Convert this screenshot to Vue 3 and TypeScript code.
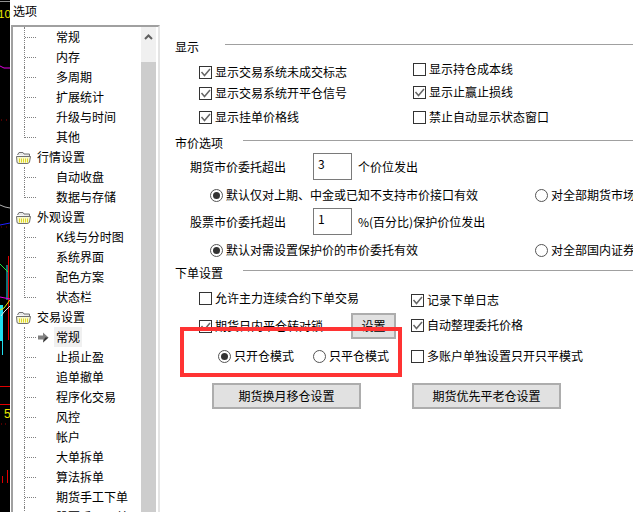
<script setup lang="ts">
interface TreeRow { text: string; kind: 'folder' | 'child'; last?: boolean; current?: boolean }
interface Check { text: string; on: boolean; gap: number }

const tree: TreeRow[] = [
  { text: '常规', kind: 'child' }, { text: '内存', kind: 'child' }, { text: '多周期', kind: 'child' },
  { text: '扩展统计', kind: 'child' }, { text: '升级与时间', kind: 'child' }, { text: '其他', kind: 'child', last: true },
  { text: '行情设置', kind: 'folder' },
  { text: '自动收盘', kind: 'child' }, { text: '数据与存储', kind: 'child', last: true },
  { text: '外观设置', kind: 'folder' },
  { text: 'K线与分时图', kind: 'child' }, { text: '系统界面', kind: 'child' }, { text: '配色方案', kind: 'child' },
  { text: '状态栏', kind: 'child', last: true },
  { text: '交易设置', kind: 'folder' },
  { text: '常规', kind: 'child', current: true }, { text: '止损止盈', kind: 'child' }, { text: '追单撤单', kind: 'child' },
  { text: '程序化交易', kind: 'child' }, { text: '风控', kind: 'child' }, { text: '帐户', kind: 'child' },
  { text: '大单拆单', kind: 'child' }, { text: '算法拆单', kind: 'child' }, { text: '期货手工下单', kind: 'child' },
  { text: '股票手工下单', kind: 'child' },
]

const showLeft: Check[] = [
  { text: '显示交易系统未成交标志', on: true, gap: 5 },
  { text: '显示交易系统开平仓信号', on: true, gap: 1 },
  { text: '显示挂单价格线', on: true, gap: 4 },
]
const showRight: Check[] = [
  { text: '显示持仓成本线', on: false, gap: 2 },
  { text: '显示止赢止损线', on: true, gap: 3 },
  { text: '禁止自动显示状态窗口', on: false, gap: 5 },
]
const orderRight: Check[] = [
  { text: '记录下单日志', on: true, gap: 7 },
  { text: '自动整理委托价格', on: true, gap: 5 },
  { text: '多账户单独设置只开只平模式', on: false, gap: 11 },
]
</script>

<template>
  <div class="screen">
    <svg class="chart" width="10" height="512" viewBox="0 0 10 512">
      <rect width="10" height="512" fill="#000" />
      <path d="M0 1.500h10" stroke="#909090" />
      <text x="-2" y="18" fill="#e8e800" font-family="Liberation Sans" font-size="11.500">10</text>
      <path d="M0 66 L4 68 L10 68" stroke="#e000e0" fill="none" />
      <path d="M1 120h1M6 120h1" stroke="#a00000" />
      <path d="M0 205 L5 207 L10 208" stroke="#b0b0b0" fill="none" />
      <path d="M0 225 L10 223" stroke="#2020ff" fill="none" />
      <path d="M1 227h1M6 227h1" stroke="#800000" />
      <path d="M8.500 256 V340" stroke="#e00000" />
      <path d="M7 265 V300" stroke="#20e0f0" />
      <path d="M0 264 L8 272" stroke="#20e040" fill="none" />
      <rect x="0" y="305" width="3" height="36" fill="#20e0f0" />
      <path d="M2.500 341 V355" stroke="#20e0f0" />
      <path d="M0 297 L10 299" stroke="#e000e0" fill="none" />
      <path d="M0 310 L4 308 L10 300" stroke="#e8e800" fill="none" />
      <path d="M1 316 L4 312 L10 306" stroke="#e0e0e0" fill="none" />
      <path d="M0 386.500h10M0 404.500h10" stroke="#e00000" />
      <text x="4" y="418" fill="#e8e800" font-family="Liberation Sans" font-size="12">5</text>
      <path d="M1 424h1M5 424h1" stroke="#a00000" />
      <path d="M2.500 476 V483M7.500 470 V483" stroke="#e00000" />
    </svg>

    <div class="dialog">
      <div class="title">选项</div>
      <div class="body">
        <div class="tree">
          <div class="tree-rows">
            <div v-for="(row, i) in tree" :key="i" class="row" :class="[row.kind, { last: row.last }]">
              <svg v-if="row.kind === 'folder'" class="folder" width="16" height="13" viewBox="0 0 16 13">
                <path d="M1.500 4 L3 1.500 H7 L8 3 H13.500 V5" fill="#e8e8e8" stroke="#707070" />
                <path d="M.5 5.500 H14.500 L13.500 11 Q13 12.500 11 12.500 H3 Q1 12.500 1 11Z" fill="#f8f8d0" stroke="#707070" />
                <path d="M3 8.500h9M3 10.500h9" stroke="#e0d820" stroke-width="2" stroke-dasharray="1 1" />
              </svg>
              <svg v-if="row.current" class="pointer" width="11" height="11" viewBox="0 0 11 11">
                <path d="M0 3.500 H5 V.5 L10.500 5.500 L5 10.500 V7.500 H0Z" fill="#808080" />
                <path d="M5 10.500 L10.500 5.500 L7 5.500Z" fill="#303030" />
              </svg>
              <span class="label" :class="{ current: row.current }">{{ row.text }}</span>
            </div>
          </div>
          <div class="scrollbar">
            <div class="scroll-up">
              <svg width="9" height="6" viewBox="0 0 9 6"><path d="M1 5 L4.500 1.500 L8 5" fill="none" stroke="#606060" stroke-width="2" /></svg>
            </div>
            <div class="scroll-thumb"></div>
          </div>
        </div>

        <div class="main">
          <div class="heading first"><span>显示</span><i></i></div>
          <div class="columns">
            <div class="col show-left">
              <div v-for="c in showLeft" :key="c.text" class="opt" :style="{ marginTop: c.gap + 'px' }">
                <span class="box"><svg v-if="c.on" width="11" height="11" viewBox="0 0 11 11"><path d="M1.500 5 L4.500 8.500 L10 2" fill="none" stroke="#666" stroke-width="1.500" /></svg></span>
                {{ c.text }}
              </div>
            </div>
            <div class="col">
              <div v-for="c in showRight" :key="c.text" class="opt" :style="{ marginTop: c.gap + 'px' }">
                <span class="box"><svg v-if="c.on" width="11" height="11" viewBox="0 0 11 11"><path d="M1.500 5 L4.500 8.500 L10 2" fill="none" stroke="#666" stroke-width="1.500" /></svg></span>
                {{ c.text }}
              </div>
            </div>
          </div>

          <div class="heading market"><span>市价选项</span><i></i></div>
          <div class="entry">
            <span class="entry-label">期货市价委托超出</span>
            <span class="field">3</span>
            <span>个价位发出</span>
          </div>
          <div class="choice">
            <span class="opt wide"><span class="radio on"></span>默认仅对上期、中金或已知不支持市价接口有效</span>
            <span class="opt"><span class="radio"></span>对全部期货市场有效</span>
          </div>
          <div class="entry stock">
            <span class="entry-label">股票市价委托超出</span>
            <span class="field">1</span>
            <span>%(百分比)保护价位发出</span>
          </div>
          <div class="choice">
            <span class="opt wide"><span class="radio on"></span>默认对需设置保护价的市价委托有效</span>
            <span class="opt"><span class="radio"></span>对全部国内证券有效</span>
          </div>

          <div class="heading order"><span>下单设置</span><i></i></div>
          <div class="columns">
            <div class="col order-left">
              <div class="opt allow"><span class="box"></span>允许主力连续合约下单交易</div>
              <div class="lock">
                <div class="opt lock-opt">
                  <span class="box"><svg width="11" height="11" viewBox="0 0 11 11"><path d="M1.500 5 L4.500 8.500 L10 2" fill="none" stroke="#666" stroke-width="1.500" /></svg></span>
                  期货日内平仓转对锁
                </div>
                <button class="btn small">设置</button>
              </div>
              <div class="modes">
                <span class="opt mode"><span class="radio on"></span>只开仓模式</span>
                <span class="opt"><span class="radio"></span>只平仓模式</span>
              </div>
              <button class="btn large left">期货换月移仓设置</button>
            </div>
            <div class="col">
              <div v-for="c in orderRight" :key="c.text" class="opt" :style="{ marginTop: c.gap + 'px' }">
                <span class="box"><svg v-if="c.on" width="11" height="11" viewBox="0 0 11 11"><path d="M1.500 5 L4.500 8.500 L10 2" fill="none" stroke="#666" stroke-width="1.500" /></svg></span>
                {{ c.text }}
              </div>
              <button class="btn large right">期货优先平老仓设置</button>
            </div>
          </div>
          <div class="mark"></div>
        </div>
      </div>
    </div>
  </div>
</template>

<style scoped>
.screen {
  width: 633px;
  height: 512px;
  display: flex;
  overflow: hidden;
  background: #fff;
  color: #000;
  font-family: "Noto Sans CJK SC", "Liberation Sans", sans-serif;
  white-space: nowrap;
}
.chart { flex: none; display: block; }
.dialog { flex: 1; min-width: 0; display: flex; flex-direction: column; }
.title { height: 25px; padding-left: 3px; font-size: 12px; line-height: 22px; flex: none; }
.body { flex: 1; min-height: 0; display: flex; }

.tree {
  width: 149px;
  margin-left: 1px;
  flex: none;
  display: flex;
  border-top: 2px solid #a0a0a0;
  border-left: 2px solid #a0a0a0;
  border-right: 2px solid #e4e4e4;
  overflow: hidden;
  box-sizing: border-box;
}
.tree-rows { width: 128px; flex: none; }
.row { height: 20px; display: flex; align-items: center; position: relative; font-size: 12px; line-height: 20px; }
.row.child { padding-left: 43px; }
.row.folder { padding-left: 3px; }
.row.child::before {
  content: "";
  position: absolute;
  left: 11px;
  top: 0;
  bottom: 0;
  border-left: 1px dotted #808080;
}
.row.child.last::before { bottom: 9px; }
.row.child::after {
  content: "";
  position: absolute;
  left: 12px;
  width: 11px;
  top: 10px;
  border-top: 1px dotted #808080;
}
.folder { margin-right: 5px; flex: none; }
.pointer { position: absolute; left: 25px; top: 5px; z-index: 1; }
.label.current { background: #f0f0f0; margin-left: -2px; padding: 0 2px; }

.scrollbar { width: 15px; flex: none; display: flex; flex-direction: column; }
.scroll-up { height: 35px; background: #f0f0f0; display: flex; justify-content: center; padding-top: 7px; box-sizing: border-box; flex: none; }
.scroll-thumb { flex: 1; background: #cdcdcd; }

.main {
  flex: 1;
  min-width: 0;
  padding: 12px 0 0 15px;
  position: relative;
  font-size: 12px;
  line-height: 20px;
}
.heading { height: 20px; display: flex; align-items: center; }
.heading i { flex: 1; height: 1px; background: #a0a0a0; margin-bottom: 6px; }
.heading.first i { margin-left: 26px; }
.heading.market { margin-top: 6px; }
.heading.market i, .heading.order i { margin-left: 20px; }
.heading.order { margin-top: 3px; }

.columns { display: flex; padding-left: 24px; }
.col { display: flex; flex-direction: column; align-items: flex-start; }
.show-left { width: 214px; }
.order-left { width: 212px; }

.opt { height: 20px; display: flex; align-items: center; }
.box {
  width: 13px;
  height: 13px;
  border: 1px solid #333;
  box-sizing: border-box;
  margin-right: 3px;
  flex: none;
  display: flex;
}
.radio {
  width: 13px;
  height: 13px;
  border: 1px solid #555;
  border-radius: 50%;
  box-sizing: border-box;
  margin-right: 3px;
  flex: none;
  display: flex;
  align-items: center;
  justify-content: center;
}
.radio.on::after { content: ""; width: 7px; height: 7px; border-radius: 50%; background: #333; }

.entry { height: 27px; display: flex; align-items: center; padding-left: 15px; }
.entry-label { width: 123px; }
.field {
  width: 39px;
  height: 27px;
  border: 1px solid #7a7a7a;
  box-sizing: border-box;
  margin-right: 6px;
  padding-left: 4px;
  line-height: 20px;
}
.entry.stock { margin-top: 3px; }
.choice { height: 20px; margin-top: 5px; padding-left: 35px; display: flex; }
.wide { width: 325px; flex: none; }

.allow { margin-top: 5px; }
.lock { display: flex; height: 26px; margin-top: 5px; align-items: center; }
.lock-opt { width: 152px; }
.modes { display: flex; margin-top: 7px; padding-left: 19px; }
.mode { width: 95px; }

.btn {
  background: #e1e1e1;
  border: 2px solid #adadad;
  box-sizing: border-box;
  height: 26px;
  padding: 0;
  font: inherit;
  color: #000;
}
.btn.small { width: 45px; }
.btn.large { width: 149px; margin-top: 17px; }
.btn.left { margin-left: 13px; }
.btn.right { margin-left: 1px; }

.mark {
  position: absolute;
  left: 20px;
  top: 302px;
  width: 222px;
  height: 50px;
  border: 4px solid #f33;
  box-sizing: border-box;
}
</style>

<style>
html, body { background: #fff; }
</style>
